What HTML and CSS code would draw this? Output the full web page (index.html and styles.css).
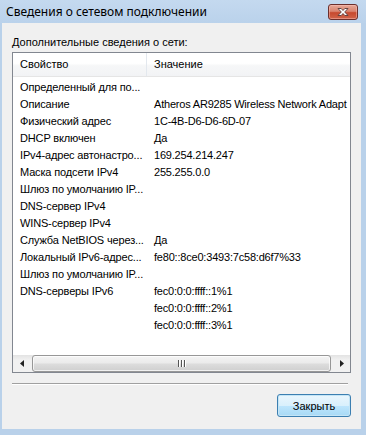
FILE: index.html
```html
<!DOCTYPE html>
<html lang="ru">
  <head>
    <meta charset="utf-8">
    <title>Сведения о сетевом подключении</title>
    <link rel="stylesheet" href="styles.css">
  </head>
  <body>
    <div class="window">
      <div class="titlebar">
        <span class="title">Сведения о сетевом подключении</span>
        <button class="close" aria-label="Закрыть">
          <svg width="16" height="10" viewBox="0 0 16 10">
            <path d="M3 1.5h3.2l1.8 2 1.8-2H13l-3.3 3.5L13 8.5H9.8L8 6.5l-1.8 2H3l3.3-3.5z" fill="#fff" stroke="#5a3a38" stroke-width="0.9" stroke-linejoin="round"/>
          </svg>
        </button>
      </div>

      <div class="client">
        <div class="label">Дополнительные сведения о сети:</div>

        <div class="listview">
          <div class="header">
            <div class="col prop">Свойство</div>
            <div class="col val">Значение</div>
          </div>
          <div class="rows">
            <div class="row"><span class="prop">Определенный для по...</span><span class="val"></span></div>
            <div class="row"><span class="prop">Описание</span><span class="val">Atheros AR9285 Wireless Network Adapt</span></div>
            <div class="row"><span class="prop">Физический адрес</span><span class="val">1C-4B-D6-D6-6D-07</span></div>
            <div class="row"><span class="prop">DHCP включен</span><span class="val">Да</span></div>
            <div class="row"><span class="prop">IPv4-адрес автонастро...</span><span class="val">169.254.214.247</span></div>
            <div class="row"><span class="prop">Маска подсети IPv4</span><span class="val">255.255.0.0</span></div>
            <div class="row"><span class="prop">Шлюз по умолчанию IP...</span><span class="val"></span></div>
            <div class="row"><span class="prop">DNS-сервер IPv4</span><span class="val"></span></div>
            <div class="row"><span class="prop">WINS-сервер IPv4</span><span class="val"></span></div>
            <div class="row"><span class="prop">Служба NetBIOS через...</span><span class="val">Да</span></div>
            <div class="row"><span class="prop">Локальный IPv6-адрес...</span><span class="val">fe80::8ce0:3493:7c58:d6f7%33</span></div>
            <div class="row"><span class="prop">Шлюз по умолчанию IP...</span><span class="val"></span></div>
            <div class="row"><span class="prop">DNS-серверы IPv6</span><span class="val">fec0:0:0:ffff::1%1</span></div>
            <div class="row"><span class="prop"></span><span class="val">fec0:0:0:ffff::2%1</span></div>
            <div class="row"><span class="prop"></span><span class="val">fec0:0:0:ffff::3%1</span></div>
          </div>
          <div class="hscroll">
            <div class="arrow">
              <svg width="4" height="7" viewBox="0 0 4 7"><path d="M4 0v7L0 3.5z" fill="#222"/></svg>
            </div>
            <div class="track">
              <div class="thumb">
                <span class="grip"></span><span class="grip"></span><span class="grip"></span>
              </div>
            </div>
            <div class="arrow">
              <svg width="4" height="7" viewBox="0 0 4 7"><path d="M0 0v7l4-3.5z" fill="#222"/></svg>
            </div>
          </div>
        </div>

        <hr class="sep">

        <div class="buttons">
          <button class="btn default">Закрыть</button>
        </div>
      </div>
    </div>
  </body>
</html>
```

FILE: styles.css
```css
:root {
  font-family: "Liberation Sans", Arial, sans-serif;
  font-size: 11px;
}

body {
  margin: 0;
  padding: 0;
  background: #b9d1ea;
}

.window {
  width: 366px;
  height: 435px;
  display: flex;
  flex-direction: column;
  background: #b9d1ea;
}

.titlebar {
  height: 23px;
  display: flex;
  align-items: flex-start;
  background: linear-gradient(#c4d9ef, #bad2eb);
}
.title {
  font-family: "Noto Sans", "Open Sans", sans-serif;
  font-size: 12px;
  line-height: 16px;
  padding: 4px 0 0 6px;
  color: #000;
}
.close {
  margin: 4px 8px 0 auto;
  width: 30px;
  height: 16px;
  padding: 0;
  border: 1px solid #6b2f2c;
  border-radius: 3px;
  background: linear-gradient(#e6a898 0%, #d98470 45%, #c7492e 55%, #d0644a 100%);
  box-shadow: inset 0 0 0 1px rgba(255, 200, 190, 0.45);
  display: flex;
  align-items: center;
  justify-content: center;
}
.close svg {
  display: block;
}

.client {
  flex: 1;
  margin: 0 5px 6px 2px;
  background: #f0f0f0;
  display: flex;
  flex-direction: column;
  padding: 12px 0 12px 0;
}

.label {
  margin-left: 10px;
  line-height: 15px;
  height: 15px;
}

.listview {
  margin: 2px 10px 0 10px;
  height: 321px;
  box-sizing: border-box;
  border: 1px solid #828790;
  background: #fff;
  display: flex;
  flex-direction: column;
  overflow: hidden;
}

.header {
  height: 24px;
  flex-shrink: 0;
  display: flex;
  background: linear-gradient(#fff 0%, #fff 45%, #f6f7f8 55%, #f2f3f5 100%);
  border-bottom: 1px solid #e5e5e5;
  box-sizing: border-box;
}
.header .col {
  line-height: 23px;
  box-sizing: border-box;
  padding-left: 7px;
  white-space: nowrap;
}
.header .prop {
  width: 134px;
  border-right: 1px solid #e3e8ee;
}

.rows {
  flex: 1;
  padding-top: 2px;
  overflow: hidden;
}
.row {
  display: flex;
  height: 17px;
  line-height: 17px;
  white-space: nowrap;
}
.row .prop {
  width: 134px;
  flex-shrink: 0;
  padding-left: 7px;
  box-sizing: border-box;
  letter-spacing: -0.15px;
}
.row .val {
  padding-left: 7px;
  letter-spacing: -0.2px;
}

.hscroll {
  height: 17px;
  flex-shrink: 0;
  display: flex;
  background: linear-gradient(#e3e3e3, #f1f1f1 30%, #f1f1f1);
}
.arrow {
  width: 17px;
  display: flex;
  align-items: center;
  justify-content: center;
}
.track {
  flex: 1;
  padding: 0 2px;
  display: flex;
}
.thumb {
  flex: 1;
  border: 1px solid #979797;
  border-radius: 3px;
  background: linear-gradient(#f4f4f4 0%, #ebebeb 45%, #dcdcdc 55%, #cfcfcf 100%);
  box-shadow: inset 0 0 0 1px rgba(255, 255, 255, 0.7);
  display: flex;
  align-items: center;
  justify-content: center;
  gap: 2px;
}
.grip {
  width: 1px;
  height: 7px;
  background: #555;
  box-shadow: 1px 0 0 #fff;
}

.sep {
  margin: 10px 13px 0 10px;
  border: none;
  border-top: 1px solid #a0a0a0;
  border-bottom: 1px solid #fff;
  height: 0;
}

.buttons {
  display: flex;
  justify-content: flex-end;
  margin-top: 9px;
  padding-right: 10px;
}
.btn {
  width: 74px;
  height: 23px;
  font-family: inherit;
  font-size: 11px;
  color: #000;
  border: 1px solid #707070;
  border-radius: 3px;
  background: linear-gradient(#f2f2f2 0%, #ebebeb 50%, #dddddd 50%, #cfcfcf 100%);
  padding: 0;
}
.btn.default {
  border-color: #3c7fb1;
  background: linear-gradient(#eaf6fd 0%, #d9f0fc 50%, #bee6fd 50%, #a7d9f5 100%);
  box-shadow: inset 0 0 0 1px #c4e5f6;
}
```
